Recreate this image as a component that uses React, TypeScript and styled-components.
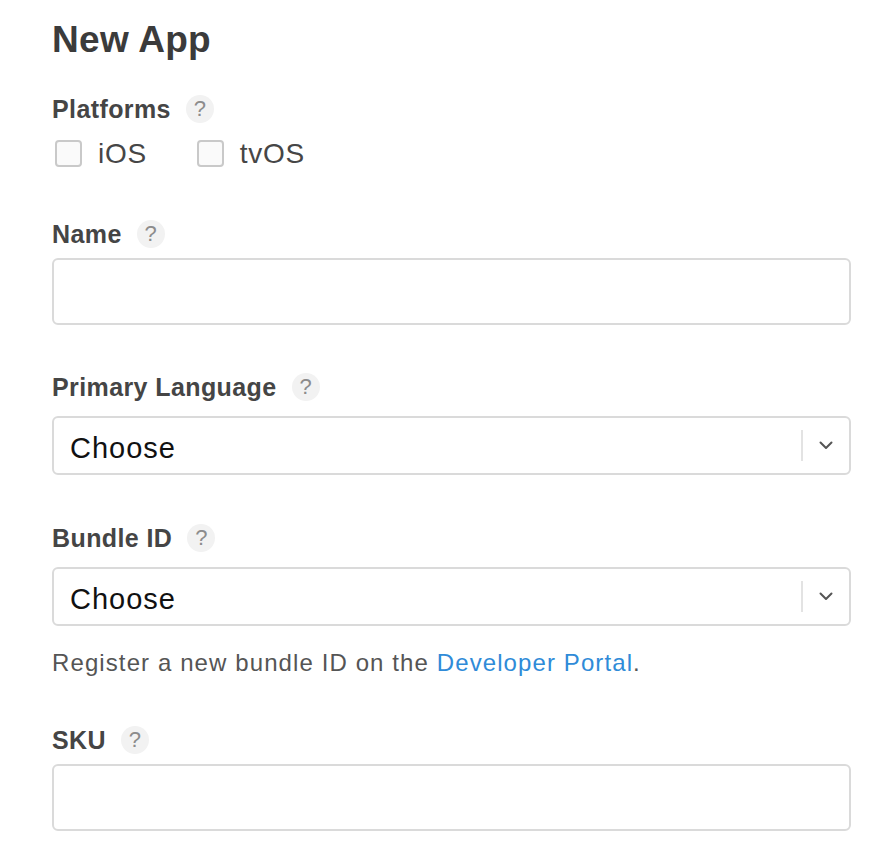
import React from "react";
import styled, { createGlobalStyle } from "styled-components";

const Global = createGlobalStyle`
  html, body { margin: 0; padding: 0; background: #ffffff; }
  body { font-family: "Liberation Sans", Arial, sans-serif; }
  * { box-sizing: border-box; }
`;

const Page = styled.div`
  padding: 21px 31px 0 52px;
  width: 882px;
`;

const Title = styled.h1`
  margin: 0;
  font-size: 37px;
  line-height: 37px;
  font-weight: 700;
  color: #3b3b3b;
  letter-spacing: 0.3px;
`;

const LabelRow = styled.div<{ $top: number }>`
  display: flex;
  align-items: center;
  height: 30px;
  margin-top: ${(p) => p.$top}px;
`;

const Label = styled.span`
  font-size: 25px;
  line-height: 30px;
  font-weight: 700;
  color: #454545;
  letter-spacing: 0.4px;
`;

const Help = styled.span`
  display: inline-flex;
  align-items: center;
  justify-content: center;
  width: 28px;
  height: 28px;
  margin-left: 15px;
  border-radius: 50%;
  background: #f2f2f2;
  color: #8c8c8c;
  font-size: 22px;
  font-weight: 400;
  line-height: 1;
`;

const CheckRow = styled.div`
  display: flex;
  align-items: center;
  margin-top: 16px;
  padding-left: 3px;
  gap: 50px;
  height: 27px;
`;

const CheckItem = styled.label`
  display: flex;
  align-items: center;
  gap: 16px;
  font-size: 28px;
  line-height: 27px;
  color: #464646;
  letter-spacing: 0.7px;
`;

const Box = styled.span`
  display: block;
  width: 27px;
  height: 27px;
  border: 2px solid #c9c9c9;
  border-radius: 4px;
  background: #fafafa;
`;

const TextInput = styled.div<{ $top: number }>`
  margin-top: ${(p) => p.$top}px;
  width: 799px;
  height: 67px;
  border: 2px solid #dadada;
  border-radius: 6px;
  background: #ffffff;
`;

const Select = styled.div<{ $top: number }>`
  display: flex;
  align-items: center;
  margin-top: ${(p) => p.$top}px;
  width: 799px;
  height: 59px;
  border: 2px solid #dadada;
  border-radius: 6px;
  background: #ffffff;
`;

const SelectValue = styled.span`
  flex: 1;
  padding: 5px 0 0 16px;
  font-size: 29px;
  color: #111111;
  letter-spacing: 1px;
`;

const Divider = styled.span`
  width: 2px;
  height: 31px;
  background: #e3e3e3;
`;

const Arrow = styled.span`
  display: flex;
  align-items: center;
  justify-content: center;
  width: 46px;
  height: 100%;
`;

const Note = styled.p`
  margin: 22px 0 0;
  font-size: 24px;
  line-height: 30px;
  color: #555555;
  letter-spacing: 1.1px;
`;

const Link = styled.a`
  color: #2f8bd8;
  text-decoration: none;
`;

const Chevron = () => (
  <svg width="14" height="9" viewBox="0 0 14 9">
    <polyline points="1.5,1.5 7,7 12.5,1.5" fill="none" stroke="#555" strokeWidth="2" strokeLinecap="round" strokeLinejoin="round" />
  </svg>
);

const FieldLabel = ({ text, top }: { text: string; top: number }) => (
  <LabelRow $top={top}>
    <Label>{text}</Label>
    <Help>?</Help>
  </LabelRow>
);

const Dropdown = ({ top }: { top: number }) => (
  <Select $top={top}>
    <SelectValue>Choose</SelectValue>
    <Divider />
    <Arrow>
      <Chevron />
    </Arrow>
  </Select>
);

export default function App() {
  return (
    <>
      <Global />
      <Page>
        <Title>New App</Title>
        <FieldLabel text="Platforms" top={36} />
        <CheckRow>
          <CheckItem>
            <Box />
            iOS
          </CheckItem>
          <CheckItem>
            <Box />
            tvOS
          </CheckItem>
        </CheckRow>
        <FieldLabel text="Name" top={52} />
        <TextInput $top={9} />
        <FieldLabel text="Primary Language" top={47} />
        <Dropdown top={14} />
        <FieldLabel text="Bundle ID" top={48} />
        <Dropdown top={14} />
        <Note>
          Register a new bundle ID on the <Link href="#">Developer Portal</Link>.
        </Note>
        <FieldLabel text="SKU" top={47} />
        <TextInput $top={9} />
      </Page>
    </>
  );
}
